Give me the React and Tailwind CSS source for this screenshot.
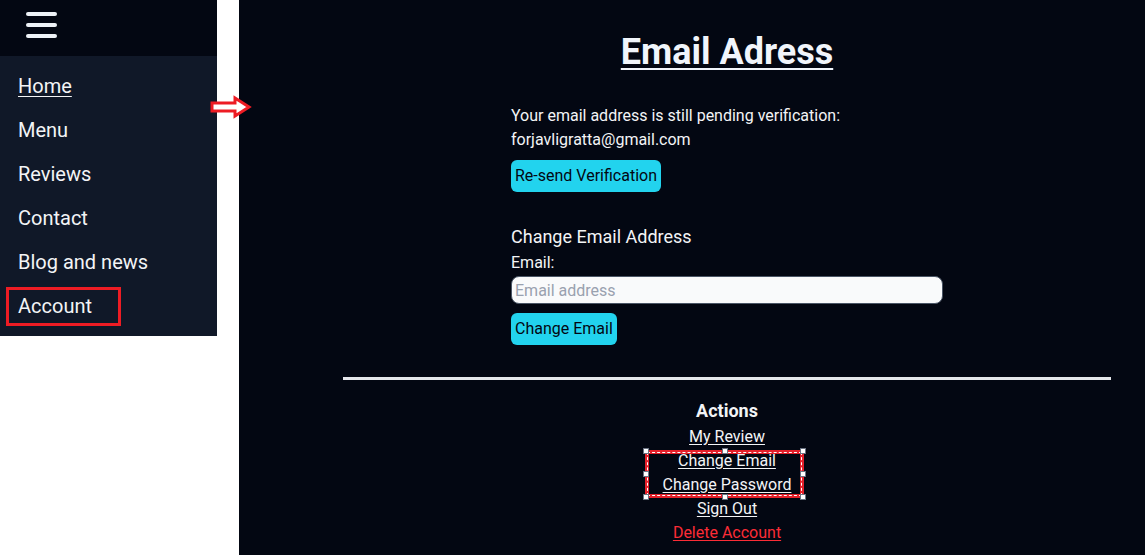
export default function App() {
  const navItems = ["Menu", "Reviews", "Contact", "Blog and news"];
  const handle = "absolute h-[6px] w-[6px] border border-gray-500 bg-white";
  return (
    <div className="relative flex min-h-[555px] bg-white font-['Roboto',sans-serif]">
      <aside className="w-[217px] self-start">
        <div className="h-14 bg-gray-950 pt-3 pl-[26px]">
          <svg width="31" height="26" viewBox="0 0 31 26" className="block">
            <rect x="0" y="0" width="31" height="4" rx="2" fill="#eef2f7" />
            <rect x="0" y="11" width="31" height="4" rx="2" fill="#eef2f7" />
            <rect x="0" y="22" width="31" height="4" rx="2" fill="#eef2f7" />
          </svg>
        </div>
        <nav className="flex flex-col gap-4 bg-gray-900 px-[18px] py-4 text-xl text-gray-100">
          <a className="underline underline-offset-[3px] decoration-1 leading-7">Home</a>
          {navItems.map((n) => (
            <a key={n} className="leading-7">{n}</a>
          ))}
          <span className="relative self-start leading-7">
            Account
            <span className="absolute -left-[12px] -right-[29px] -top-[5px] -bottom-[6px] border-[3px] border-[#ed1c24]" />
          </span>
        </nav>
      </aside>
      <div className="w-[22px]" />
      <main className="flex-1 bg-gray-950 pl-[104px] pr-[34px] pt-[32px] text-gray-100">
        <div className="w-[768px] flex flex-col items-center">
          <h1 className="text-4xl font-bold leading-10 underline decoration-2 underline-offset-[4px] text-[#f1f5fb]">
            Email Adress
          </h1>
          <div className="mt-8 w-[432px] flex flex-col items-start text-base">
            <p className="leading-6">Your email address is still pending verification:</p>
            <p className="leading-6">forjavligratta@gmail.com</p>
            <button className="mt-2 rounded-md bg-[#22d3ee] px-1 py-1 text-base leading-6 text-gray-950">
              Re-send Verification
            </button>
            <h2 className="mt-[31px] text-lg leading-7">Change Email Address</h2>
            <label className="leading-6">Email:</label>
            <input
              placeholder="Email address"
              className="mt-[1px] h-7 w-full rounded-lg border border-gray-600 bg-gray-50 px-[3px] text-base text-gray-900 placeholder:text-gray-400 outline-none"
            />
            <button className="mt-[9px] rounded-md bg-[#22d3ee] px-1 py-1 text-base leading-6 text-gray-950">
              Change Email
            </button>
          </div>
          <div className="mt-[32px] h-[3px] w-full bg-gray-200" />
          <div className="mt-[17px] flex flex-col items-center text-base">
            <h3 className="text-lg font-bold leading-7">Actions</h3>
            <a className="leading-6 underline underline-offset-2">My Review</a>
            <div className="relative flex flex-col items-center">
              <a className="leading-6 underline underline-offset-2">Change Email</a>
              <a className="leading-6 underline underline-offset-2">Change Password</a>
              <span className="absolute -left-[18px] -right-[13px] top-[1px] -bottom-[1px] border-4 border-[#e5202a]">
                <span className="absolute -inset-[2px] border border-dashed border-white" />
                <span className={`${handle} -left-[6px] -top-[6px]`} />
                <span className={`${handle} left-1/2 -ml-[3px] -top-[6px]`} />
                <span className={`${handle} -right-[6px] -top-[6px]`} />
                <span className={`${handle} -left-[6px] top-1/2 -mt-[3px]`} />
                <span className={`${handle} -right-[6px] top-1/2 -mt-[3px]`} />
                <span className={`${handle} -left-[6px] -bottom-[6px]`} />
                <span className={`${handle} left-1/2 -ml-[3px] -bottom-[6px]`} />
                <span className={`${handle} -right-[6px] -bottom-[6px]`} />
              </span>
            </div>
            <a className="leading-6 underline underline-offset-2">Sign Out</a>
            <a className="leading-6 underline underline-offset-2 text-red-500">Delete Account</a>
          </div>
        </div>
      </main>
      <svg
        className="absolute left-[209px] top-[95px]"
        width="44"
        height="24"
        viewBox="0 0 44 24"
      >
        <polygon
          points="3,8 26,8 26,3 40,12 26,21 26,16 3,16"
          fill="#ffffff"
          stroke="#ed1c24"
          strokeWidth="3"
          strokeLinejoin="miter"
        />
      </svg>
    </div>
  );
}
